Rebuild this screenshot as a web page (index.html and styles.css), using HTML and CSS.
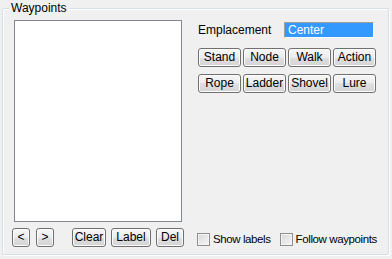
FILE: index.html
```html
<!DOCTYPE html>
<html lang="en">
<head>
  <meta charset="UTF-8" />
  <title>Waypoints</title>
  <link rel="stylesheet" href="styles.css">
</head>
<body>
  <div class="group">
    <span class="group-title">Waypoints</span>

    <div class="left">
      <div class="listbox"></div>
      <div class="nav">
        <button class="btn btn-arrow">&lt;</button>
        <button class="btn btn-arrow next">&gt;</button>
        <button class="btn btn-clear">Clear</button>
        <button class="btn btn-label">Label</button>
        <button class="btn btn-del">Del</button>
      </div>
    </div>

    <div class="right">
      <div class="field-row">
        <span class="field-label">Emplacement</span>
        <div class="edit">Center</div>
      </div>

      <div class="btn-grid">
        <button class="btn">Stand</button>
        <button class="btn">Node</button>
        <button class="btn">Walk</button>
        <button class="btn">Action</button>
        <button class="btn">Rope</button>
        <button class="btn">Ladder</button>
        <button class="btn">Shovel</button>
        <button class="btn">Lure</button>
      </div>

      <div class="checks">
        <label class="check"><span class="box"></span>Show labels</label>
        <label class="check"><span class="box"></span>Follow waypoints</label>
      </div>
    </div>
  </div>
</body>
</html>
```

FILE: styles.css
```css
html, body {
  margin: 0;
  width: 392px;
  height: 259px;
  background: #f0f0f0;
  font-family: "Liberation Sans", Arial, sans-serif;
  font-size: 11px;
  color: #000;
}
.group {
  position: relative;
  box-sizing: border-box;
  margin: 8px 0 0 2px;
  width: 387px;
  height: 247px;
  border: 1px solid #d5dfe5;
  box-shadow: 1px 1px 0 #fff, inset 1px 1px 0 #fff;
  border-radius: 2px;
  padding: 11px 11px 6px 11px;
  display: flex;
}
.group-title {
  position: absolute;
  top: -8px;
  left: 6px;
  padding: 0 2px;
  line-height: 14px;
  font-size: 12px;
  background: #f0f0f0;
}
.left {
  width: 168px;
  flex-shrink: 0;
  display: flex;
  flex-direction: column;
}
.listbox {
  box-sizing: border-box;
  height: 202px;
  background: #fff;
  border: 1px solid #828790;
}
.nav {
  display: flex;
  margin: 6px 0 0 -2px;
}
.btn {
  box-sizing: border-box;
  flex-shrink: 0;
  height: 19px;
  padding: 0;
  border: 1px solid #707070;
  border-radius: 3px;
  background: linear-gradient(#f6f6f6, #ececec 50%, #e0e0e0 50%, #d4d4d4);
  box-shadow: inset 0 0 0 1px #fcfcfc;
  font-family: inherit;
  font-size: 12px;
  color: #000;
  line-height: 17px;
  white-space: nowrap;
}
.btn-arrow {
  width: 18px;
}
.btn-arrow.next {
  margin-left: 6px;
}
.btn-clear {
  width: 34px;
  margin-left: 18px;
}
.btn-label {
  width: 40px;
  margin-left: 5px;
}
.btn-del {
  width: 28px;
  margin-left: 5px;
}
.right {
  flex: 1;
  min-width: 0;
  margin-left: 16px;
  display: flex;
  flex-direction: column;
}
.field-row {
  display: flex;
  align-items: center;
  margin-top: 2px;
}
.field-label {
  width: 86px;
  font-size: 12px;
}
.edit {
  box-sizing: border-box;
  width: 90px;
  height: 16px;
  padding-left: 3px;
  line-height: 14px;
  font-size: 12px;
  color: #fff;
  background: #3399ff;
  border-top: 1px solid #a0a0a0;
  border-left: 1px solid #a0a0a0;
  border-bottom: 1px solid #fff;
  border-right: 1px solid #fff;
}
.btn-grid {
  display: grid;
  grid-template-columns: repeat(4, 43px);
  column-gap: 2px;
  row-gap: 7px;
  margin-top: 10px;
}
.checks {
  margin-top: auto;
  height: 19px;
  padding-top: 1px;
  box-sizing: border-box;
  display: flex;
  align-items: center;
  margin-left: -1px;
  white-space: nowrap;
}
.check {
  display: flex;
  align-items: center;
  font-size: 11.5px;
  letter-spacing: -0.4px;
}
.check + .check {
  margin-left: 9px;
}
.box {
  box-sizing: border-box;
  flex-shrink: 0;
  width: 13px;
  height: 13px;
  margin-right: 3px;
  border: 1px solid #8f8f8f;
  background: linear-gradient(135deg, #d8d8d8, #f6f6f6);
  box-shadow: inset 0 0 0 1px #f4f4f4;
}
```
